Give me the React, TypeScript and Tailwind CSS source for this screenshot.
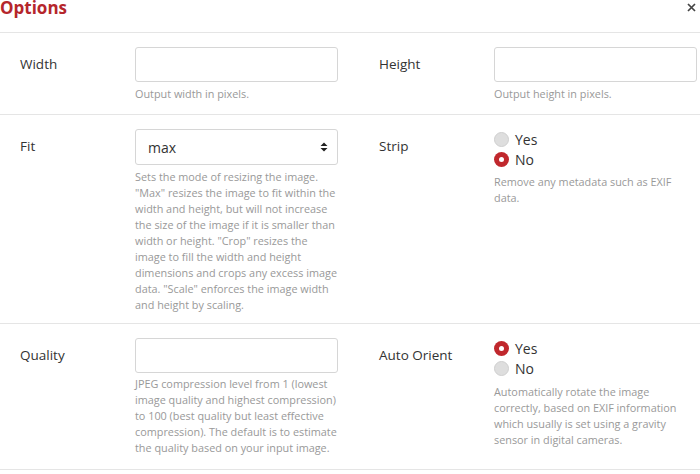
import React from "react";

type Radio = { label: string; checked: boolean };

const Label: React.FC<{ text: string }> = ({ text }) => (
  <div className="w-[115px] shrink-0 pt-[7px] text-[13.5px] leading-[20px] text-[#333]">{text}</div>
);

const Help: React.FC<{ className?: string; children: React.ReactNode }> = ({ className = "mt-[3px]", children }) => (
  <p className={`${className} text-[10.85px] leading-[16px] text-[#999]`}>{children}</p>
);

const TextInput: React.FC = () => (
  <div className="h-[35px] w-full rounded-[3px] border border-[#d6d6d6] bg-white" />
);

const RadioGroup: React.FC<{ options: Radio[] }> = ({ options }) => (
  <div className="flex flex-col">
    {options.map((o) => (
      <div key={o.label} className="flex h-[20px] items-center gap-[6px] text-[14px] text-[#333]">
        {o.checked ? (
          <span className="flex h-[15px] w-[15px] items-center justify-center rounded-full bg-[#c0282d]">
            <span className="h-[5px] w-[5px] rounded-full bg-white" />
          </span>
        ) : (
          <span className="h-[15px] w-[15px] rounded-full border border-[#cfcfcf] bg-[#dedede]" />
        )}
        <span>{o.label}</span>
      </div>
    ))}
  </div>
);

const Field: React.FC<{ label: string; children: React.ReactNode }> = ({ label, children }) => (
  <div className="flex w-[318px]">
    <Label text={label} />
    <div className="w-[203px]">{children}</div>
  </div>
);

export default function App() {
  return (
    <div className="h-[474px] w-[700px] overflow-hidden bg-white font-['Open_Sans',sans-serif]">
      {/* header */}
      <div className="flex h-[33px] items-start justify-between border-b border-[#e5e5e5]">
        <h2 className="text-[17px] font-bold leading-[15px] text-[#b5262c]">Options</h2>
        <svg className="mr-[4px] mt-[3px]" width="9" height="9" viewBox="0 0 9 9">
          <path d="M1 1L8 8M8 1L1 8" stroke="#444" strokeWidth="1.7" />
        </svg>
      </div>

      {/* width / height */}
      <div className="flex gap-[41px] border-b border-[#e5e5e5] px-5 pb-[12px] pt-[14px]">
        <Field label="Width">
          <TextInput />
          <Help className="mt-[4px]">Output width in pixels.</Help>
        </Field>
        <Field label="Height">
          <TextInput />
          <Help className="mt-[4px]">Output height in pixels.</Help>
        </Field>
      </div>

      {/* fit / strip */}
      <div className="flex gap-[41px] border-b border-[#e5e5e5] px-5 pb-[10px] pt-[14px]">
        <Field label="Fit">
          <div className="flex h-[36px] items-center justify-between rounded-[3px] border border-[#d6d6d6] bg-white pl-[12px] pr-[9px] text-[14px] text-[#333]">
            <span>max</span>
            <svg width="8" height="10" viewBox="0 0 8 10">
              <path d="M4 0.5L7.5 4H0.5Z M4 9.5L7.5 6H0.5Z" fill="#222" />
            </svg>
          </div>
          <Help className="mt-[4px]">
            Sets the mode of resizing the image. "Max" resizes the image to fit within the width and
            height, but will not increase the size of the image if it is smaller than width or height.
            "Crop" resizes the image to fill the width and height dimensions and crops any excess image
            data. "Scale" enforces the image width and height by scaling.
          </Help>
        </Field>
        <Field label="Strip">
          <RadioGroup
            options={[
              { label: "Yes", checked: false },
              { label: "No", checked: true },
            ]}
          />
          <Help className="mt-[5px]">Remove any metadata such as EXIF data.</Help>
        </Field>
      </div>

      {/* quality / auto orient */}
      <div className="flex gap-[41px] border-b border-[#e5e5e5] px-5 pb-[13px] pt-[14px]">
        <Field label="Quality">
          <TextInput />
          <Help>
            JPEG compression level from 1 (lowest image quality and highest compression) to 100 (best
            quality but least effective compression). The default is to estimate the quality based on
            your input image.
          </Help>
        </Field>
        <Field label="Auto Orient">
          <RadioGroup
            options={[
              { label: "Yes", checked: true },
              { label: "No", checked: false },
            ]}
          />
          <Help className="mt-[6px]">
            Automatically rotate the image correctly, based on EXIF information which usually is set
            using a gravity sensor in digital cameras.
          </Help>
        </Field>
      </div>
    </div>
  );
}
